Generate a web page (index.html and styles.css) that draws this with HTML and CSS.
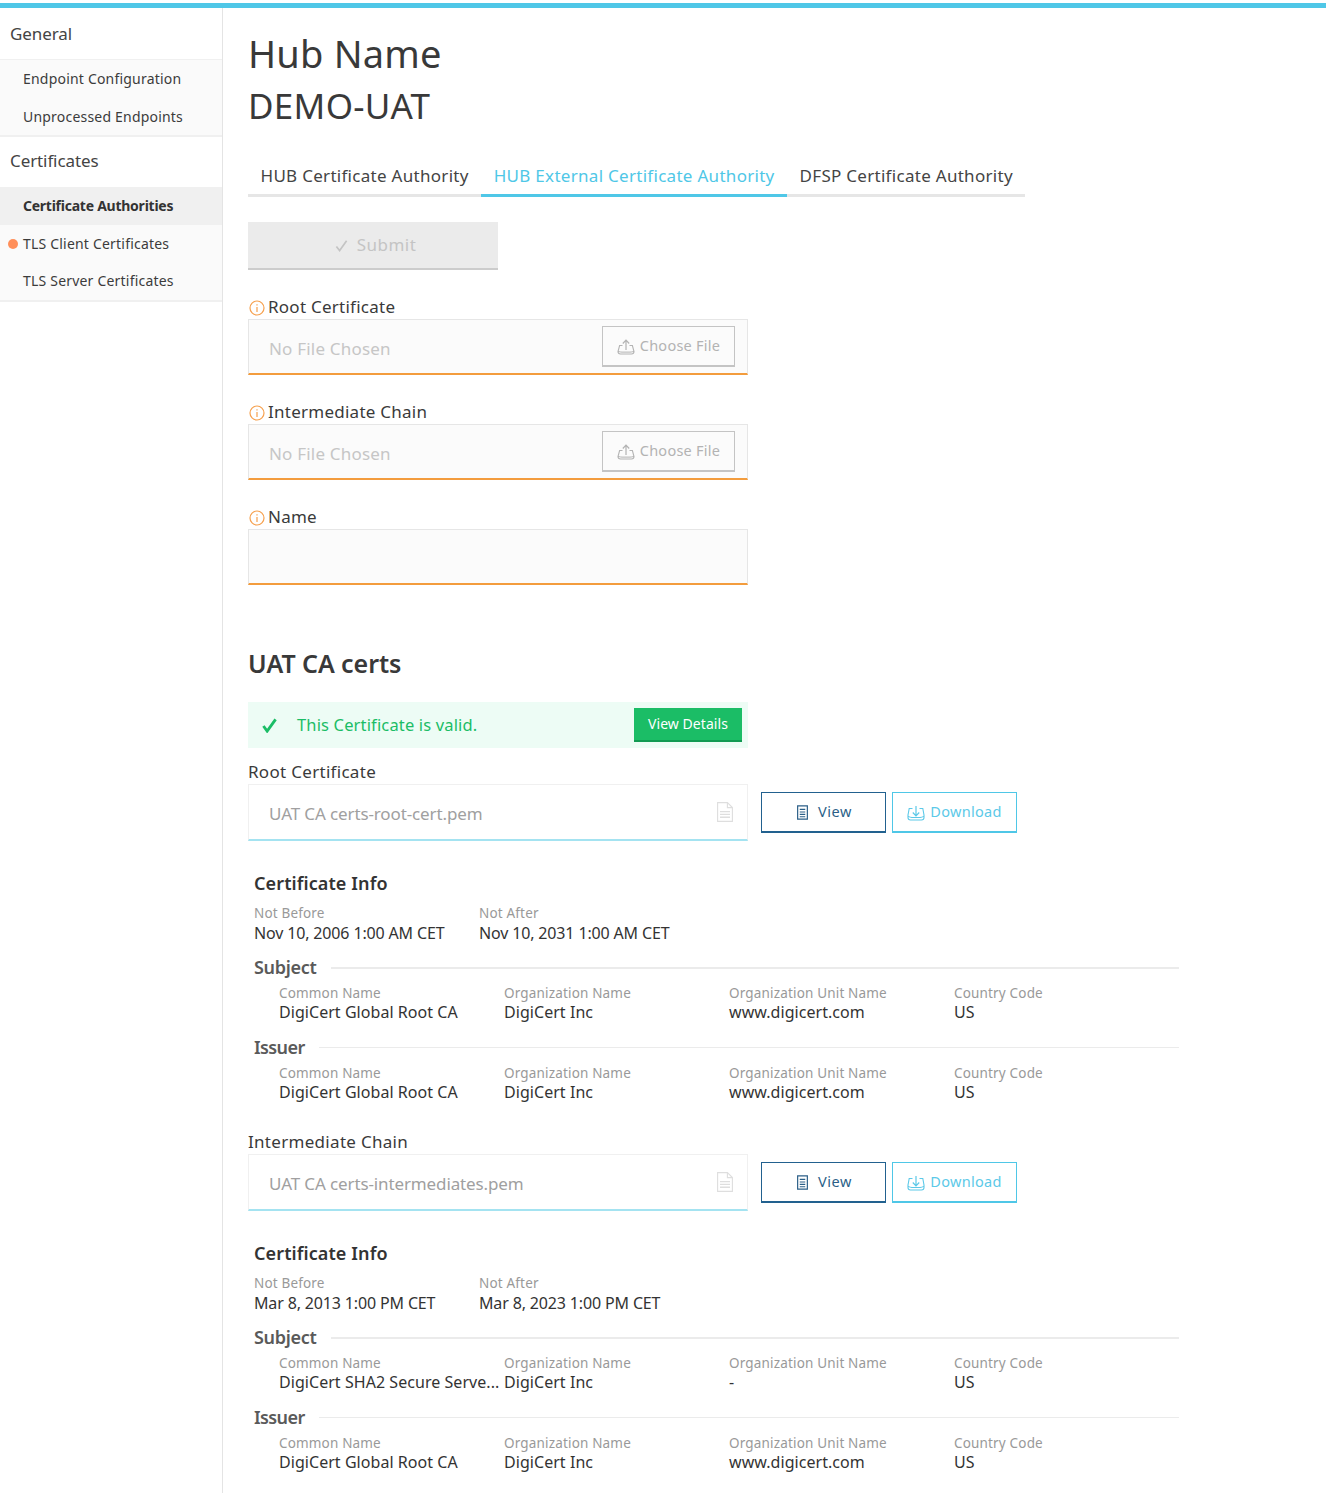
FILE: index.html
```html
<!DOCTYPE html>
<html lang="en">
<head>
    <meta charset="UTF-8">
    <title>Hub Name - DEMO-UAT</title>
    <link rel="stylesheet" href="styles.css">
</head>
<body>
    <svg class="icon-defs">
        <symbol id="i-info" viewBox="0 0 16 16">
            <circle cx="8" cy="8" r="7" fill="none" stroke="currentColor" stroke-width="1.2"/>
            <path d="M8 4.2v1.4M8 7v5" fill="none" stroke="currentColor" stroke-width="1.2"/>
        </symbol>
        <symbol id="i-upload" viewBox="0 0 18 16">
            <path d="M9 11V1.500M5.800 4.500L9 1.200l3.200 3.300" fill="none" stroke="currentColor" stroke-width="1.200"/>
            <path d="M5.500 6.500H2.600L1 12.500c0 1.600 1.200 2.500 2.500 2.500h11c1.300 0 2.500-.9 2.500-2.500l-1.600-6h-2.900" fill="none" stroke="currentColor" stroke-width="1.100"/>
            <path d="M1 12.500c1.500 0 2 .6 4 .6h8c2 0 2.500-.6 4-.6" fill="none" stroke="currentColor" stroke-width="1"/>
        </symbol>
        <symbol id="i-download" viewBox="0 0 18 16">
            <path d="M9 1v9.500M5.800 7.500L9 10.800l3.200-3.300" fill="none" stroke="currentColor" stroke-width="1.200"/>
            <path d="M5.500 3.500H2.200L1 10v2.500C1 14 2.200 15 3.500 15h11c1.300 0 2.500-1 2.500-2.500V10l-1.200-6.500h-3.300" fill="none" stroke="currentColor" stroke-width="1.100"/>
            <path d="M1 11.500c1.500 0 2 1 4 1h8c2 0 2.500-1 4-1" fill="none" stroke="currentColor" stroke-width="1"/>
        </symbol>
        <symbol id="i-doc" viewBox="0 0 12 16">
            <path d="M.7.7h10.600v14.600H.7z" fill="none" stroke="currentColor" stroke-width="1.300"/>
            <path d="M3 4h6v1.200H3zM3 6.800h6V8H3zM3 9.400h6v1.200H3zM3 12h6v1.200H3z" fill="currentColor"/>
        </symbol>
        <symbol id="i-file" viewBox="0 0 16 20">
            <path d="M.6.6h9.800l5 5v13.800H.6z" fill="none" stroke="currentColor" stroke-width="1.100"/>
            <path d="M10.400.6v5h5" fill="none" stroke="currentColor" stroke-width="1.100"/>
            <path d="M3 9h10v1.300H3zM3 11.800h10v1.300H3zM3 14.600h10v1.300H3z" fill="currentColor"/>
        </symbol>
    </svg>

    <div class="topbar"></div>
    <div class="layout">
        <nav class="sidebar">
            <div class="menu-title">General</div>
            <div class="menu-group">
                <a class="menu-item">Endpoint Configuration</a>
                <a class="menu-item">Unprocessed Endpoints</a>
            </div>
            <div class="menu-title">Certificates</div>
            <div class="menu-group certs">
                <a class="menu-item active">Certificate Authorities</a>
                <a class="menu-item pending">TLS Client Certificates</a>
                <a class="menu-item">TLS Server Certificates</a>
            </div>
        </nav>

        <main class="content">
            <h1 class="hub-title">Hub Name</h1>
            <h2 class="hub-name">DEMO-UAT</h2>

            <div class="tabs">
                <div class="tab">HUB Certificate Authority</div>
                <div class="tab selected">HUB External Certificate Authority</div>
                <div class="tab">DFSP Certificate Authority</div>
            </div>

            <button class="submit" disabled>
                <svg class="submit-check" viewBox="0 0 14 14"><path d="M1.500 8l3.500 4.500L12.500 2" fill="none" stroke="currentColor" stroke-width="1.800"/></svg>
                Submit
            </button>

            <div class="field">
                <label class="field-label"><svg class="info"><use href="#i-info"/></svg>Root Certificate</label>
                <div class="input required">
                    <span class="placeholder">No File Chosen</span>
                    <button class="choose"><svg class="tray"><use href="#i-upload"/></svg>Choose File</button>
                </div>
            </div>
            <div class="field">
                <label class="field-label"><svg class="info"><use href="#i-info"/></svg>Intermediate Chain</label>
                <div class="input required">
                    <span class="placeholder">No File Chosen</span>
                    <button class="choose"><svg class="tray"><use href="#i-upload"/></svg>Choose File</button>
                </div>
            </div>
            <div class="field">
                <label class="field-label"><svg class="info"><use href="#i-info"/></svg>Name</label>
                <div class="input required"></div>
            </div>

            <h3 class="ca-title">UAT CA certs</h3>

            <div class="valid-bar">
                <svg class="valid-check" viewBox="0 0 16 16"><path d="M1.500 8.500l4 5.500L14.500 1.500" fill="none" stroke="currentColor" stroke-width="3"/></svg>
                <span class="valid-text">This Certificate is valid.</span>
                <button class="details">View Details</button>
            </div>

            <section class="cert">
                <div class="cert-label">Root Certificate</div>
                <div class="file-row">
                    <div class="input filled">
                        <span class="filename">UAT CA certs-root-cert.pem</span>
                        <svg class="file-icon"><use href="#i-file"/></svg>
                    </div>
                    <button class="btn btn-view"><svg class="doc"><use href="#i-doc"/></svg>View</button>
                    <button class="btn btn-download"><svg class="tray"><use href="#i-download"/></svg>Download</button>
                </div>
                <div class="info-block">
                    <h4 class="info-title">Certificate Info</h4>
                    <div class="dates">
                        <div class="kv"><div class="k">Not Before</div><div class="v">Nov 10, 2006 1:00 AM CET</div></div>
                        <div class="kv"><div class="k">Not After</div><div class="v">Nov 10, 2031 1:00 AM CET</div></div>
                    </div>
                    <div class="divider first"><span>Subject</span></div>
                    <div class="names">
                        <div class="kv"><div class="k">Common Name</div><div class="v">DigiCert Global Root CA</div></div>
                        <div class="kv"><div class="k">Organization Name</div><div class="v">DigiCert Inc</div></div>
                        <div class="kv"><div class="k">Organization Unit Name</div><div class="v">www.digicert.com</div></div>
                        <div class="kv"><div class="k">Country Code</div><div class="v">US</div></div>
                    </div>
                    <div class="divider issuer"><span>Issuer</span></div>
                    <div class="names">
                        <div class="kv"><div class="k">Common Name</div><div class="v">DigiCert Global Root CA</div></div>
                        <div class="kv"><div class="k">Organization Name</div><div class="v">DigiCert Inc</div></div>
                        <div class="kv"><div class="k">Organization Unit Name</div><div class="v">www.digicert.com</div></div>
                        <div class="kv"><div class="k">Country Code</div><div class="v">US</div></div>
                    </div>
                </div>
            </section>

            <section class="cert">
                <div class="cert-label">Intermediate Chain</div>
                <div class="file-row">
                    <div class="input filled">
                        <span class="filename">UAT CA certs-intermediates.pem</span>
                        <svg class="file-icon"><use href="#i-file"/></svg>
                    </div>
                    <button class="btn btn-view"><svg class="doc"><use href="#i-doc"/></svg>View</button>
                    <button class="btn btn-download"><svg class="tray"><use href="#i-download"/></svg>Download</button>
                </div>
                <div class="info-block">
                    <h4 class="info-title">Certificate Info</h4>
                    <div class="dates">
                        <div class="kv"><div class="k">Not Before</div><div class="v">Mar 8, 2013 1:00 PM CET</div></div>
                        <div class="kv"><div class="k">Not After</div><div class="v">Mar 8, 2023 1:00 PM CET</div></div>
                    </div>
                    <div class="divider first"><span>Subject</span></div>
                    <div class="names">
                        <div class="kv"><div class="k">Common Name</div><div class="v">DigiCert SHA2 Secure Serve...</div></div>
                        <div class="kv"><div class="k">Organization Name</div><div class="v">DigiCert Inc</div></div>
                        <div class="kv"><div class="k">Organization Unit Name</div><div class="v">-</div></div>
                        <div class="kv"><div class="k">Country Code</div><div class="v">US</div></div>
                    </div>
                    <div class="divider issuer"><span>Issuer</span></div>
                    <div class="names">
                        <div class="kv"><div class="k">Common Name</div><div class="v">DigiCert Global Root CA</div></div>
                        <div class="kv"><div class="k">Organization Name</div><div class="v">DigiCert Inc</div></div>
                        <div class="kv"><div class="k">Organization Unit Name</div><div class="v">www.digicert.com</div></div>
                        <div class="kv"><div class="k">Country Code</div><div class="v">US</div></div>
                    </div>
                </div>
            </section>
        </main>
    </div>
</body>
</html>
```

FILE: styles.css
```css
* {
    box-sizing: border-box;
}

html, body {
    margin: 0;
    padding: 0;
}

body {
    font-family: "Noto Sans", "Open Sans", sans-serif;
    color: #393939;
    background: #fff;
    height: 1493px;
    overflow: hidden;
}

button {
    font-family: inherit;
    cursor: pointer;
}

.icon-defs {
    display: none;
}

.topbar {
    height: 5px;
    margin-top: 3px;
    background: #4fc7e7;
}

.layout {
    display: flex;
    height: 1485px;
}

/* sidebar */
.sidebar {
    width: 223px;
    flex: none;
    border-right: 1px solid #e4e4e4;
}

.menu-title {
    height: 50px;
    padding: 0 10px;
    font-size: 17px;
    line-height: 48px;
    letter-spacing: -.1px;
    color: #444;
}

.menu-title:first-child {
    height: 51px;
    line-height: 51px;
}

.menu-group {
    background: #fafafa;
    border-bottom: 2px solid #f0f0f0;
}

.menu-title:first-child + .menu-group {
    border-top: 1px solid #f0f0f0;
}

.menu-item {
    display: block;
    position: relative;
    height: 37.6px;
    padding-left: 23px;
    font-size: 14px;
    line-height: 37px;
    letter-spacing: .2px;
    color: #3c3c3c;
}

.certs .menu-item {
    line-height: 38px;
}

.certs .menu-item.pending {
    line-height: 37px;
}

.menu-item.active {
    background: #f0f0f0;
    font-weight: 700;
    letter-spacing: -.25px;
    color: #333;
}

.menu-item.pending::before {
    content: "";
    position: absolute;
    left: 8px;
    top: 14px;
    width: 10px;
    height: 10px;
    border-radius: 50%;
    background: #ff8f5a;
}

/* main column */
.content {
    flex: 1;
    padding-left: 25px;
}

.hub-title {
    margin: 26px 0 0;
    height: 40px;
    font-size: 38px;
    font-weight: 400;
    line-height: 38px;
    letter-spacing: .2px;
}

.hub-name {
    margin: 13px 0 0;
    height: 40px;
    font-size: 35px;
    font-weight: 400;
    line-height: 38px;
    letter-spacing: .3px;
}

.tabs {
    display: flex;
    width: 777px;
    height: 37px;
    margin-top: 33px;
    border-bottom: 3px solid #e6e6e6;
}

.tab {
    height: 37px;
    padding: 0 12.5px;
    font-size: 17px;
    line-height: 32px;
    letter-spacing: .29px;
    white-space: nowrap;
    color: #444;
}

.tab.selected {
    color: #4fc7e7;
    border-bottom: 3px solid #4fc7e7;
}

.submit {
    display: flex;
    align-items: center;
    justify-content: center;
    gap: 9px;
    width: 250px;
    height: 48px;
    margin-top: 25px;
    padding: 0 0 2px 5px;
    border: 0;
    border-bottom: 2px solid #ccc;
    background: #ebebeb;
    color: #c4c4c4;
    font-size: 17px;
    letter-spacing: .5px;
}

.submit-check {
    width: 13px;
    height: 13px;
    margin-top: 3px;
}

.field {
    width: 500px;
    margin-top: 25px;
}

.field-label {
    display: flex;
    align-items: center;
    height: 22px;
    margin-bottom: 2px;
    font-size: 17px;
    letter-spacing: .25px;
    color: #3a3a3a;
}

.info {
    width: 16px;
    height: 16px;
    margin: 3px 3px 0 1px;
    color: #f6a04d;
}

.input {
    display: flex;
    align-items: center;
    position: relative;
    width: 500px;
    padding-left: 20px;
    border: 1px solid #ebebeb;
}

.input.required {
    height: 56px;
    background: #fbfbfb;
    border-color: #e6e6e6;
    border-bottom: 2px solid #f39c3d;
}

.input.filled {
    flex: none;
    height: 56.5px;
    background: #fff;
    border-color: #f0f0f0;
    border-bottom: 2px solid #a4e3f1;
}

.placeholder {
    font-size: 17px;
    letter-spacing: .2px;
    padding-top: 4px;
    color: #c6c6c6;
}

.choose {
    position: absolute;
    right: 12px;
    top: 6px;
    display: flex;
    align-items: center;
    justify-content: center;
    width: 133px;
    height: 41px;
    padding: 0 0 2px;
    border: 1px solid #c4c4c4;
    border-bottom-width: 2px;
    background: #fbfbfb;
    color: #b3b3b3;
    font-size: 14.5px;
    letter-spacing: .25px;
}

.tray {
    width: 18px;
    height: 16px;
    margin: 3px 5px 0 0;
}

.ca-title {
    margin: 64px 0 0;
    height: 30px;
    font-size: 25px;
    font-weight: 600;
    line-height: 28px;
    letter-spacing: -.05px;
    color: #393939;
}

.valid-bar {
    display: flex;
    align-items: center;
    width: 500px;
    height: 46px;
    margin-top: 23px;
    padding-left: 14px;
    background: #edfcf5;
}

.valid-check {
    width: 15px;
    height: 15px;
    flex: none;
    color: #1bbd66;
}

.valid-text {
    margin-left: 20px;
    padding-bottom: 2px;
    font-size: 16.5px;
    letter-spacing: .15px;
    color: #1bbd66;
}

.details {
    width: 108px;
    height: 34px;
    margin-left: auto;
    margin-right: 6px;
    padding: 0 0 2px;
    border: 0;
    border-bottom: 2px solid #129a52;
    background: #1bbd66;
    color: #fff;
    font-size: 14px;
    letter-spacing: .05px;
}

/* certificate sections */
.cert {
    margin-top: 12px;
}

.cert + .cert {
    margin-top: 28px;
}

.cert-label {
    height: 24px;
    font-size: 17px;
    line-height: 24px;
    letter-spacing: .3px;
    color: #3a3a3a;
}

.file-row {
    display: flex;
    align-items: flex-start;
}

.filename {
    font-size: 17px;
    letter-spacing: -.12px;
    padding-top: 4px;
    color: #a0a0a0;
}

.file-icon {
    position: absolute;
    right: 14px;
    top: 17px;
    width: 16px;
    height: 20px;
    color: #dedede;
}

.btn {
    display: flex;
    align-items: center;
    justify-content: center;
    flex: none;
    width: 125px;
    height: 41px;
    margin-top: 8px;
    padding: 0 0 2px;
    background: #fff;
    font-size: 14.5px;
    letter-spacing: .3px;
    border: 1px solid;
    border-bottom-width: 2px;
}

.btn-view {
    margin-left: 13px;
    padding-left: 2px;
    border-color: #22618f;
    color: #2b5f88;
    letter-spacing: .6px;
}

.btn-download {
    margin-left: 6px;
    border-color: #4fc7e7;
    color: #5cc9e8;
}

.doc {
    width: 11px;
    height: 15px;
    margin: 2px 10px 0 0;
}

.info-block {
    width: 925px;
    margin: 30px 0 0 6px;
}

.info-title {
    margin: 0;
    height: 24px;
    font-size: 18px;
    font-weight: 600;
    line-height: 24px;
    letter-spacing: .1px;
    color: #333;
}

.dates {
    display: grid;
    grid-template-columns: 225px 225px;
    margin-top: 8px;
}

.k {
    height: 20px;
    font-size: 13.5px;
    line-height: 20px;
    letter-spacing: .17px;
    color: #999;
}

.v {
    height: 19.5px;
    font-size: 16px;
    line-height: 19.5px;
    letter-spacing: .05px;
    color: #333;
    white-space: nowrap;
}

.dates .v {
    line-height: 21px;
    letter-spacing: -.15px;
}

.divider {
    display: flex;
    align-items: center;
    gap: 14px;
    height: 24px;
    margin-top: 13px;
    font-size: 18px;
    font-weight: 600;
    letter-spacing: -.3px;
    color: #5a5a5a;
}

.divider.issuer {
    letter-spacing: -.6px;
}

.divider::after {
    content: "";
    flex: 1;
    height: 1px;
    margin-top: 1px;
    background: #ebebeb;
}

.divider.first::after {
    height: 2px;
}

.names {
    display: grid;
    grid-template-columns: 225px 225px 225px 225px;
    margin: 3.5px 0 0 25px;
}
```
